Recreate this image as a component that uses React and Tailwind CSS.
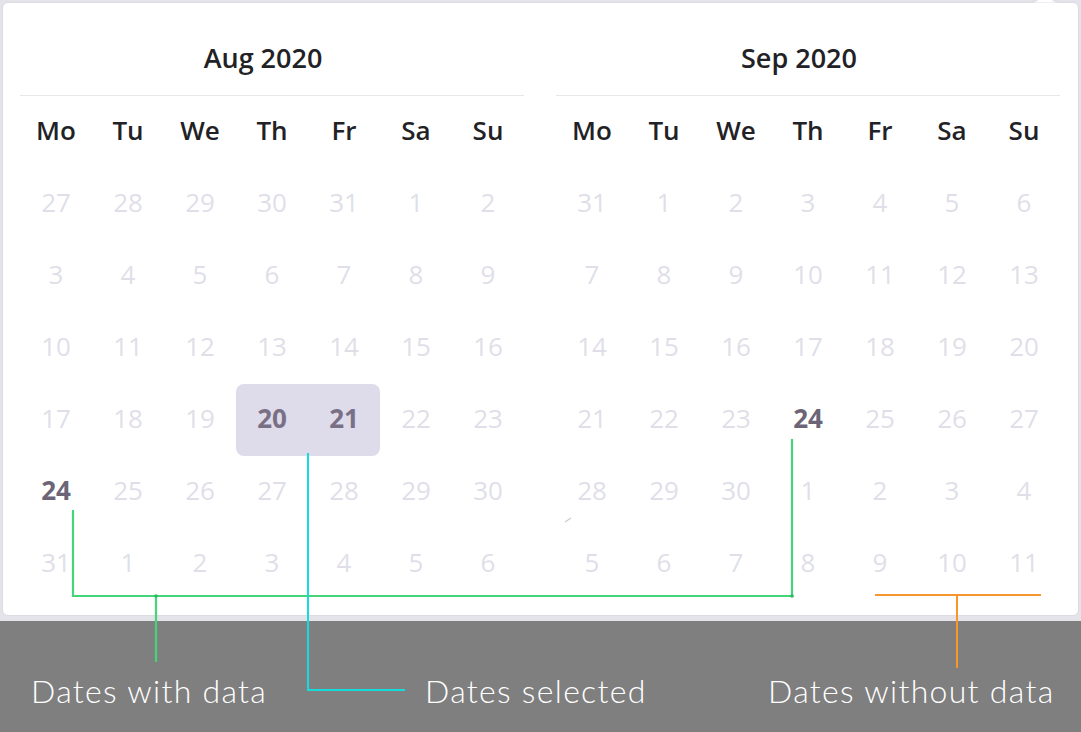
import React from "react";

const DAYS = ["Mo", "Tu", "We", "Th", "Fr", "Sa", "Su"];

const AUG = [
  [27, 28, 29, 30, 31, 1, 2],
  [3, 4, 5, 6, 7, 8, 9],
  [10, 11, 12, 13, 14, 15, 16],
  [17, 18, 19, 20, 21, 22, 23],
  [24, 25, 26, 27, 28, 29, 30],
  [31, 1, 2, 3, 4, 5, 6],
];
const SEP = [
  [31, 1, 2, 3, 4, 5, 6],
  [7, 8, 9, 10, 11, 12, 13],
  [14, 15, 16, 17, 18, 19, 20],
  [21, 22, 23, 24, 25, 26, 27],
  [28, 29, 30, 1, 2, 3, 4],
  [5, 6, 7, 8, 9, 10, 11],
];

function Cell({ value, kind }) {
  if (kind === "selStart" || kind === "selEnd" || kind === "sel") {
    const round =
      kind === "selStart" ? "rounded-l-lg" : kind === "selEnd" ? "rounded-r-lg" : "";
    return (
      <div
        className={`h-[72px] flex items-center justify-center pb-[3px] bg-[#dedbea] ${round} text-[26px] font-bold text-[#7a7085]`}
      >
        {value}
      </div>
    );
  }
  if (kind === "data") {
    return (
      <div className="h-[72px] flex items-center justify-center pb-[3px] text-[26px] font-bold text-[#6b6577]">
        {value}
      </div>
    );
  }
  return (
    <div className="h-[72px] flex items-center justify-center pb-[3px] text-[26px] text-[#e0dfe9]">
      {value}
    </div>
  );
}

function Month({ title, rows, marks }) {
  return (
    <div className="w-[504px] flex flex-col">
      <div className="h-[93px] border-b border-[#e8e7ec] flex items-center justify-center pt-[16px] pr-[18px]">
        <span className="text-[27px] font-semibold text-[#222226] leading-none">{title}</span>
      </div>
      <div className="grid grid-cols-7">
        {DAYS.map((d) => (
          <div
            key={d}
            className="h-[72px] flex items-center justify-center pb-[4px] text-[26px] font-semibold text-[#222226]"
          >
            {d}
          </div>
        ))}
      </div>
      {rows.map((row, r) => (
        <div key={r} className="grid grid-cols-7">
          {row.map((v, c) => (
            <Cell key={c} value={v} kind={marks[`${r}-${c}`]} />
          ))}
        </div>
      ))}
    </div>
  );
}

export default function App() {
  return (
    <div
      className="relative w-[1081px] h-[732px] overflow-hidden bg-[#e4e3ea] flex flex-col"
      style={{ fontFamily: '"Open Sans", "Noto Sans", sans-serif' }}
    >
      <div className="mx-[2px] mt-[2px] h-[614px] bg-white border border-[#dcdbe2] rounded-[6px] flex gap-[32px] pl-[17px]">
        <Month
          title="Aug 2020"
          rows={AUG}
          marks={{ "3-3": "selStart", "3-4": "selEnd", "4-0": "data" }}
        />
        <Month title="Sep 2020" rows={SEP} marks={{ "3-3": "data" }} />
      </div>
      <div className="h-[5px]" />
      <div
        className="flex-1 bg-[#7f7f7f] grid grid-cols-[394px_343px_1fr] pl-[31px] pt-[50px] text-white text-[32px] font-light tracking-[1.3px] leading-[40px]"
        style={{ fontFamily: 'Lato, "Noto Sans", sans-serif' }}
      >
        <div>Dates with data</div>
        <div>Dates selected</div>
        <div>Dates without data</div>
      </div>

      <svg
        className="absolute left-0 top-0 pointer-events-none"
        width="1081"
        height="732"
        viewBox="0 0 1081 732"
      >
        {/* popover caret */}
        <path d="M1030 2.5 Q1036 2.5 1040 -2 L1050 -2 Q1054 2.5 1060 2.5 Z" fill="#ffffff" />
        <path d="M1030 2.5 Q1036 2.5 1040 -2 M1050 -2 Q1054 2.5 1060 2.5" fill="none" stroke="#dcdbe2" strokeWidth="1" />
        {/* stray mark */}
        <path d="M565 522 L571 518" stroke="#c9c8d2" strokeWidth="1.2" />
        {/* green */}
        <path
          d="M73 510 L73 596 L792 596 L792 439 M156 596 L156 662"
          fill="none"
          stroke="#45d477"
          strokeWidth="2.2"
        />
        <circle cx="156" cy="596" r="1.8" fill="#2fb85f" />
        <circle cx="792" cy="596" r="1.8" fill="#2fb85f" />
        {/* cyan */}
        <path d="M308 453 L308 690 L405 690" fill="none" stroke="#14dcdc" strokeWidth="2" />
        {/* orange */}
        <path d="M875 595 L1041 595 M957 595 L957 668" fill="none" stroke="#f7962b" strokeWidth="2" />
      </svg>
    </div>
  );
}
